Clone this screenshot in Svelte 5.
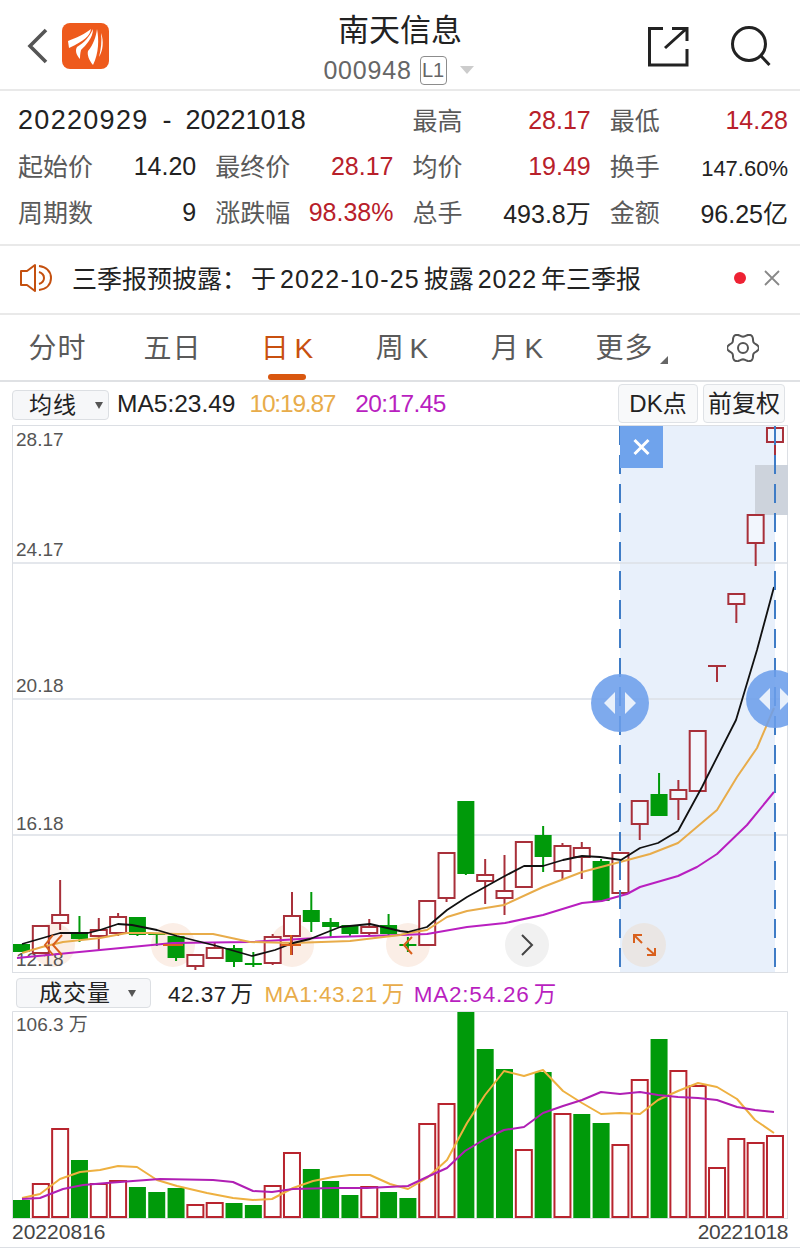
<script lang="ts">
	const step = 19.32;
	const cx = (i: number) => 21.5 + step * i;

	// kind, body top, body bottom, wick top, wick bottom
	const candles: [string, number, number, number, number][] = [
		['g', 944, 952, 944, 952], ['r', 926, 953, 926, 953], ['r', 915, 923, 880, 930],
		['g', 933, 939, 916, 942], ['r', 930, 936, 918, 950], ['r', 917, 933, 913, 936],
		['g', 917, 935, 917, 936], ['g', 933, 935, 933, 946], ['g', 936, 958, 936, 961],
		['r', 955, 966, 955, 970], ['r', 948, 958, 942, 958], ['g', 948, 962, 945, 967],
		['g', 963, 965, 952, 967], ['r', 937, 963, 934, 965], ['r', 916, 936, 892, 955],
		['g', 910, 922, 892, 932], ['g', 922, 927, 918, 938], ['g', 925, 934, 925, 936],
		['r', 927, 933, 919, 936], ['g', 925, 934, 914, 936], ['g', 944, 946, 937, 952],
		['r', 901, 945, 901, 945], ['r', 853, 898, 853, 902], ['g', 801, 874, 801, 875],
		['r', 875, 881, 859, 904], ['r', 891, 898, 855, 915], ['r', 842, 887, 842, 887],
		['g', 835, 857, 826, 872], ['r', 846, 871, 843, 879], ['r', 848, 857, 842, 879],
		['g', 861, 901, 859, 901], ['r', 853, 893, 853, 893], ['r', 801, 824, 801, 840],
		['g', 794, 816, 773, 816], ['r', 790, 799, 780, 820], ['r', 731, 791, 731, 791],
		['r', 666, 666, 666, 682], ['r', 594, 604, 594, 623], ['r', 515, 543, 515, 566],
		['r', 428, 442, 426, 455]
	];

	const ma5 = '22,944 60,933 88,933 100,930 118,924 132,925 157,930 177,936 217,946 252,956 275,950 293,943 310,939 340,927 370,924 400,931 408,932 427,927 447,910 467,897 503,877 524,866 543,866 563,860 582,856 600,857 621,860 640,848 658,843 678,831 702,787 707,777 736,720 757,650 774,587';
	const ma10 = '22,953 42,947 63,942 100,938 127,933 150,933 177,934 213,934 250,942 293,943 350,941 400,935 408,933 427,930 447,917 467,911 504,905 543,887 582,872 620,862 650,854 678,843 717,810 737,777 757,748 774,708';
	const ma20 = '17,958 100,950 173,943 250,942 333,937 400,935 427,934 467,927 505,923 543,915 582,903 602,901 627,894 640,887 678,876 697,867 717,854 747,825 774,792';

	// kind, top of bar (baseline is 1218)
	const bars: [string, number][] = [
		['g', 1200], ['r', 1184], ['r', 1129], ['g', 1160], ['r', 1184], ['r', 1181], ['g', 1187], ['g', 1192],
		['g', 1188], ['r', 1205], ['r', 1203], ['g', 1203], ['g', 1205], ['r', 1186], ['r', 1153], ['g', 1169],
		['g', 1181], ['g', 1195], ['r', 1187], ['g', 1192], ['g', 1198], ['r', 1124], ['r', 1104], ['g', 1012],
		['g', 1049], ['g', 1069], ['r', 1150], ['g', 1072], ['r', 1114], ['g', 1114], ['g', 1123], ['r', 1145],
		['r', 1080], ['g', 1039], ['r', 1071], ['r', 1086], ['r', 1168], ['r', 1139], ['r', 1143], ['r', 1136]
	];

	const vol1 = '22,1198 40,1194 60,1179 80,1172 100,1170 118,1166 137,1167 157,1180 177,1186 207,1193 233,1198 253,1200 272,1199 293,1188 313,1181 333,1177 350,1175 370,1175 390,1184 408,1189 427,1178 447,1160 467,1123 485,1095 504,1071 524,1076 543,1070 563,1091 582,1103 601,1114 620,1113 640,1114 658,1100 678,1091 698,1083 717,1087 737,1099 755,1120 774,1133';
	const vol2 = '22,1199 40,1198 63,1189 83,1185 107,1183 133,1181 160,1179 213,1180 233,1182 253,1191 272,1192 293,1189 333,1188 367,1188 408,1186 427,1177 447,1168 465,1151 485,1139 504,1130 524,1127 543,1113 563,1106 582,1100 601,1092 620,1094 640,1092 658,1095 678,1097 698,1098 717,1100 737,1107 755,1110 774,1112';

	const stats = [
		{ label: '起始价', value: '14.20' },
		{ label: '最终价', value: '28.17', red: true },
		{ label: '均价', value: '19.49', red: true },
		{ label: '换手', value: '147.60%', small: true },
		{ label: '周期数', value: '9' },
		{ label: '涨跌幅', value: '98.38%', red: true },
		{ label: '总手', value: '493.8万' },
		{ label: '金额', value: '96.25亿' }
	];

	const tabs = ['分时', '五日', '日 K', '周 K', '月 K', '更多'];

	// six-lobed gear outline
	const gear = Array.from({ length: 96 }, (_, i) => {
		const a = (i / 96) * Math.PI * 2;
		const r = 13 + 1.7 * Math.cos(6 * a);
		return `${(16 + r * 1.08 * Math.cos(a)).toFixed(2)},${(15 + r * Math.sin(a)).toFixed(2)}`;
	}).join(' ');
</script>

<div class="page">
	<header class="head">
		<div class="head-left">
			<svg class="back" width="24" height="36" viewBox="0 0 24 36"><path d="M20 2 4 18l16 16" fill="none" stroke="#555" stroke-width="3.6" /></svg>
			<svg width="47" height="46" viewBox="0 0 47 46">
				<rect width="47" height="46" rx="8" fill="#ee5a1c" />
				<path d="M6 18C14 15 23 11 29 6 28 13 22 18 7 25Z" fill="#fff" />
				<path d="M31 6C31 15 24 22 19 27 18 31 18 34 18 36 14 32 13 27 15 24 22 20 28 13 31 6Z" fill="#fff" />
				<path d="M35 6C37 16 37 30 31 42 27 37 25 32 26 28 31 22 34 14 35 6Z" fill="#fff" />
				<path d="M39 10C42 18 41 28 37 34 39 26 40 18 39 10Z" fill="#fff" />
			</svg>
		</div>
		<div class="head-title">
			<div class="name">南天信息</div>
			<div class="code">
				<span>000948</span>
				<span class="badge">L1</span>
				<span class="caret"></span>
			</div>
		</div>
		<div class="head-right">
			<svg width="44" height="44" viewBox="0 0 44 44" fill="none" stroke="#222" stroke-width="3">
				<path d="M17 3.500H3.500V40H41V24" />
				<path d="M26 3.500H41V16M19 23 40 4" />
			</svg>
			<svg width="42" height="42" viewBox="0 0 42 42" fill="none" stroke="#222" stroke-width="3">
				<circle cx="19" cy="18" r="16.500" />
				<path d="m31 30 8.500 9" />
			</svg>
		</div>
	</header>

	<section class="stats">
		<div class="range"><span class="from">20220929</span><span class="sep">-</span><span>20221018</span></div>
		<div class="stat"><span class="lab">最高</span><span class="val red">28.17</span></div>
		<div class="stat"><span class="lab">最低</span><span class="val red">14.28</span></div>
		{#each stats as s}
			<div class="stat">
				<span class="lab">{s.label}</span>
				<span class="val" class:red={s.red} class:small={s.small}>{s.value}</span>
			</div>
		{/each}
	</section>

	<section class="notice">
		<svg width="34" height="30" viewBox="0 0 34 30" fill="none" stroke="#c4500f" stroke-width="2">
			<path d="M16 2v26l-8-6H2V8h6Z" stroke-linejoin="round" />
			<path d="M20 3c8 1 12 6 12 12s-4 11-12 12M20 9c3 1 5 3 5 6s-2 5-5 6" />
		</svg>
		<span class="notice-text">三季报预披露：<span class="yu">于</span> <span class="num">2022-10-25</span> 披露 <span class="num2">2022</span> 年三季报</span>
		<span class="dot"></span>
		<svg class="close" width="16" height="16" viewBox="0 0 16 16"><path d="m1 1 14 14M15 1 1 15" stroke="#888" stroke-width="1.800" /></svg>
	</section>

	<nav class="tabs">
		{#each tabs as t, i}
			<div class="tab" class:active={i === 2} class:last={i === 5}>
				{t}
				{#if i === 5}<span class="more"></span>{/if}
			</div>
		{/each}
		<svg class="gear" width="32" height="30" viewBox="0 0 32 30" fill="none" stroke="#555" stroke-width="2">
			<polygon points={gear} stroke-linejoin="round" />
			<circle cx="16" cy="15" r="5" />
		</svg>
	</nav>

	<div class="toolbar">
		<div class="select">均线<span class="tri"></span></div>
		<span class="legend">MA5:23.49</span>
		<span class="legend orange">10:19.87</span>
		<span class="legend purple">20:17.45</span>
		<div class="btns">
			<div class="btn dk">DK点</div>
			<div class="btn fq">前复权</div>
		</div>
	</div>

	<svg class="chart" width="800" height="548" viewBox="0 425 800 548">
		<rect x="12.500" y="425.500" width="775" height="547" fill="#fff" stroke="#dcdfe4" />
		<rect x="620" y="426" width="155" height="546" fill="#e8f0fb" />
		<path d="M13 563H787M13 699H787M13 835H787" stroke="#dcdfe6" stroke-width="1.500" />
		<rect x="755" y="465" width="33" height="50" fill="#cdd3dc" />

		<text x="16" y="446" class="axis">28.17</text>
		<text x="16" y="556" class="axis">24.17</text>
		<text x="16" y="692" class="axis">20.18</text>
		<text x="16" y="830" class="axis">16.18</text>

		<circle cx="53" cy="945" r="22" fill="#fbeee6" />
		<circle cx="173" cy="945" r="22" fill="#fbeee6" />
		<circle cx="292" cy="945" r="22" fill="#fbeee6" />
		<circle cx="408" cy="945" r="22" fill="#fbeee6" />
		<circle cx="527" cy="945" r="22" fill="#f1f1f1" />
		<circle cx="644" cy="945" r="22" fill="#eae6e4" />

		<text x="16" y="966" class="axis">12.18</text>

		{#each candles as [k, top, bottom, wt, wb], i}
			{@const x = cx(i)}
			<path d="M{x} {wt}V{wb}" stroke={k === 'g' ? '#009a0a' : '#a8303a'} stroke-width="2" />
			{#if k === 'g'}
				<rect x={x - 8.500} y={top} width="17" height={bottom - top} fill="#009a0a" />
			{:else if top === bottom}
				<path d="M{x - 9} {top}H{x + 9}" stroke="#a8303a" stroke-width="2" />
			{:else}
				<rect x={x - 8} y={top} width="16" height={bottom - top} fill={x > 625 ? '#f2f6fd' : '#fff'} stroke="#a8303a" stroke-width="2" />
			{/if}
		{/each}

		<polyline points={ma20} class="line" stroke="#b91fc0" stroke-width="2" />
		<polyline points={ma10} class="line" stroke="#e8ac4a" stroke-width="2" />
		<polyline points={ma5} class="line" stroke="#111" stroke-width="1.800" />

		<path d="M620 426V973M775 426V973" stroke="#3f7cc6" stroke-width="2" stroke-dasharray="19 10" />

		<path d="M53 935 45 945l8 10M62 935l-9 10 9 10" fill="none" stroke="#d9601c" stroke-width="2" />
		<path d="M163 945H183" stroke="#d9601c" stroke-width="2" />
		<path d="M281 945H301M291 935V955" stroke="#d9601c" stroke-width="2" />
		<path d="M412 937 404 945l8 9" fill="none" stroke="#d9601c" stroke-width="2" />
		<path d="M522 935 532 945l-10 10" fill="none" stroke="#444" stroke-width="2" />
		<path d="M634 935 642 943M634 943V935H642M655 955l-8-7M655 948V955H647" fill="none" stroke="#d9601c" stroke-width="2" />

		<rect x="620" y="426" width="43" height="42" fill="#6fa3ec" />
		<path d="m634.500 440 14 14M648.500 440l-14 14" stroke="#fff" stroke-width="3" />

		<circle cx="620" cy="703" r="29" fill="#6c9eea" fill-opacity="0.88" />
		<path d="M615 692v22l-11-11ZM625 692v22l11-11Z" fill="#e8f0fb" />
		<clipPath id="right-clip"><rect x="700" y="660" width="88" height="90" /></clipPath>
		<g clip-path="url(#right-clip)">
			<circle cx="775" cy="699" r="29" fill="#6c9eea" fill-opacity="0.88" />
			<path d="M770 688v22l-11-11ZM780 688v22l11-11Z" fill="#e8f0fb" />
		</g>
	</svg>

	<div class="toolbar vol">
		<div class="select vsel">成交量<span class="tri"></span></div>
		<span class="vlegend dark">42.37 万</span>
		<span class="vlegend orange">MA1:43.21 万</span>
		<span class="vlegend purple">MA2:54.26 万</span>
	</div>

	<svg class="volume" width="800" height="208" viewBox="0 1011 800 208">
		<path d="M12.500 1219V1011.500H787.500V1219" fill="none" stroke="#dcdfe4" />
		<path d="M12 1218.500H788" stroke="#dcdfe4" />
		<text x="16" y="1031" class="axis">106.3 万</text>
		{#each bars as [k, top], i}
			{@const x = cx(i)}
			{#if k === 'g'}
				<rect x={x - 8.500} y={top} width="17" height={1218 - top} fill="#009a0a" />
			{:else}
				<rect x={x - 8} y={top} width="16" height={1217 - top} fill="#fff" stroke="#b8242e" stroke-width="2" />
			{/if}
		{/each}
		<polyline points={vol1} class="line" stroke="#eeb040" stroke-width="2" />
		<polyline points={vol2} class="line" stroke="#b01fb4" stroke-width="2" />
	</svg>

	<div class="dates">
		<span>20220816</span>
		<span class="end">20221018</span>
	</div>
</div>

<style>
	:global(body) {
		background: #fff;
	}

	.page {
		width: 800px;
		height: 1250px;
		overflow: hidden;
		color: #222;
		font-family: 'Liberation Sans', 'Noto Sans CJK SC', sans-serif;
	}

	.head {
		height: 91px;
		box-sizing: border-box;
		border-bottom: 2px solid #e9e9e9;
		display: grid;
		grid-template-columns: 1fr auto 1fr;
		align-items: start;
		padding: 0 26px;
	}

	.head-left {
		display: flex;
		align-items: center;
		gap: 12px;
		padding-top: 23px;
	}

	.head-title {
		display: flex;
		flex-direction: column;
		align-items: center;
		padding-top: 11px;
	}

	.name {
		font-size: 31px;
		line-height: 40px;
		color: #222;
	}

	.code {
		display: flex;
		align-items: center;
		gap: 8px;
		font-size: 25px;
		letter-spacing: 0.8px;
		color: #666;
		line-height: 32px;
		margin-top: 3px;
		margin-right: 3px;
	}

	.badge {
		font-size: 20px;
		letter-spacing: 0;
		width: 25px;
		height: 27px;
		line-height: 27px;
		text-align: center;
		border: 1px solid #8c8c8c;
		border-radius: 4px;
	}

	.caret {
		width: 0;
		height: 0;
		margin-left: 5px;
		border: 7px solid transparent;
		border-top: 8px solid #ccc;
		border-bottom: 0;
	}

	.head-right {
		display: flex;
		justify-content: flex-end;
		align-items: center;
		gap: 40px;
		padding-top: 25px;
		padding-right: 2px;
	}

	.stats {
		height: 155px;
		box-sizing: border-box;
		padding: 5px 12px 0 18px;
		border-bottom: 2px solid #e9e9e9;
		display: grid;
		grid-template-columns: repeat(4, 1fr);
		column-gap: 19px;
		grid-auto-rows: 46px;
		align-items: center;
	}

	.range {
		grid-column: span 2;
		display: flex;
		align-items: baseline;
		font-size: 27px;
		white-space: nowrap;
		padding-top: 3px;
	}

	.from {
		letter-spacing: 1.3px;
	}

	.sep {
		width: 37px;
		text-align: center;
	}

	.stat {
		display: flex;
		justify-content: space-between;
		align-items: center;
		white-space: nowrap;
	}

	.lab {
		font-size: 25px;
		color: #5a5a5a;
	}

	.val {
		font-size: 25px;
		color: #222;
		padding-top: 2px;
	}

	.val.red {
		color: #b8202a;
	}

	.val.small {
		font-size: 22px;
		padding-top: 8px;
	}

	.notice {
		height: 69px;
		box-sizing: border-box;
		border-bottom: 2px solid #e9e9e9;
		display: flex;
		align-items: center;
		padding: 0 20px 4px 19px;
	}

	.notice-text {
		margin-left: 19px;
		margin-bottom: 2px;
		font-size: 25px;
		word-spacing: -3px;
		flex: 1;
	}

	.yu {
		margin-left: 4px;
	}

	.num {
		letter-spacing: 1.2px;
	}

	.num2 {
		letter-spacing: 0.9px;
	}

	.dot {
		width: 12px;
		height: 12px;
		border-radius: 50%;
		background: #ee2233;
		margin-right: 18px;
	}

	.tabs {
		height: 67px;
		box-sizing: border-box;
		border-bottom: 2px solid #dfe1e4;
		display: grid;
		grid-template-columns: repeat(6, 115px) 1fr;
		align-items: center;
	}

	.tab {
		position: relative;
		text-align: center;
		font-size: 28px;
		color: #5a5a5a;
		letter-spacing: 1px;
		word-spacing: -4px;
		line-height: 62px;
		padding-top: 3px;
	}

	.tab.last {
		padding-right: 16px;
		box-sizing: border-box;
	}

	.tab.active {
		color: #c8500f;
	}

	.tab.active::after {
		content: '';
		position: absolute;
		left: 38px;
		bottom: 0;
		width: 38px;
		height: 6px;
		border-radius: 3px;
		background: #d9570f;
	}

	.more {
		position: absolute;
		left: 85px;
		bottom: 16px;
		border-left: 8px solid transparent;
		border-bottom: 8px solid #666;
	}

	.gear {
		justify-self: start;
		margin-left: 37px;
	}

	.toolbar {
		height: 43px;
		box-sizing: border-box;
		display: flex;
		align-items: center;
		padding-left: 12px;
	}

	.select {
		position: relative;
		box-sizing: border-box;
		width: 97px;
		height: 30px;
		padding-left: 16px;
		line-height: 28px;
		font-size: 23px;
		letter-spacing: 1px;
		background: #f6f7f9;
		border: 1px solid #dcdfe3;
		border-radius: 4px;
		margin-right: 8px;
		margin-top: 2px;
	}

	.tri {
		position: absolute;
		right: 5px;
		top: 11px;
		border: 4.500px solid transparent;
		border-top: 7px solid #555;
		border-bottom: 0;
	}

	.legend {
		font-size: 24.500px;
		margin-right: 14px;
		margin-top: 1px;
	}

	.legend.orange {
		letter-spacing: -1.200px;
		margin-right: 20px;
	}

	.legend.purple {
		letter-spacing: -0.600px;
	}

	.orange {
		color: #e8ac4a;
	}

	.purple {
		color: #b91fc0;
	}

	.btns {
		margin-left: auto;
		display: flex;
		gap: 5px;
		margin-right: 15px;
	}

	.btn {
		box-sizing: border-box;
		height: 39px;
		line-height: 37px;
		font-size: 24px;
		text-align: center;
		background: #f8f9fa;
		border: 1px solid #dfe2e6;
		border-radius: 4px;
	}

	.dk {
		width: 80px;
	}

	.fq {
		width: 82px;
	}

	.chart,
	.volume {
		display: block;
	}

	.axis {
		font-size: 19px;
		fill: #555;
	}

	.line {
		fill: none;
		stroke-linejoin: round;
	}

	.toolbar.vol {
		height: 38px;
		padding-left: 16px;
	}

	.vsel {
		width: 135px;
		height: 30px;
		padding-left: 22px;
		margin-right: 17px;
		margin-top: 1px;
	}

	.vsel .tri {
		right: 14px;
	}

	.vlegend {
		font-size: 22.500px;
		letter-spacing: 0.5px;
		word-spacing: -3px;
		margin-right: 11px;
		white-space: nowrap;
	}

	.vlegend.orange {
		margin-right: 9px;
	}

	.vlegend.purple {
		letter-spacing: 0.8px;
	}

	.dark {
		color: #222;
	}

	.dates {
		height: 29px;
		box-sizing: border-box;
		border-bottom: 1px solid #dcdfe4;
		display: flex;
		justify-content: space-between;
		padding: 0 12px;
		font-size: 21px;
		line-height: 26px;
		color: #444;
	}

	.end {
		letter-spacing: -0.400px;
	}
</style>
